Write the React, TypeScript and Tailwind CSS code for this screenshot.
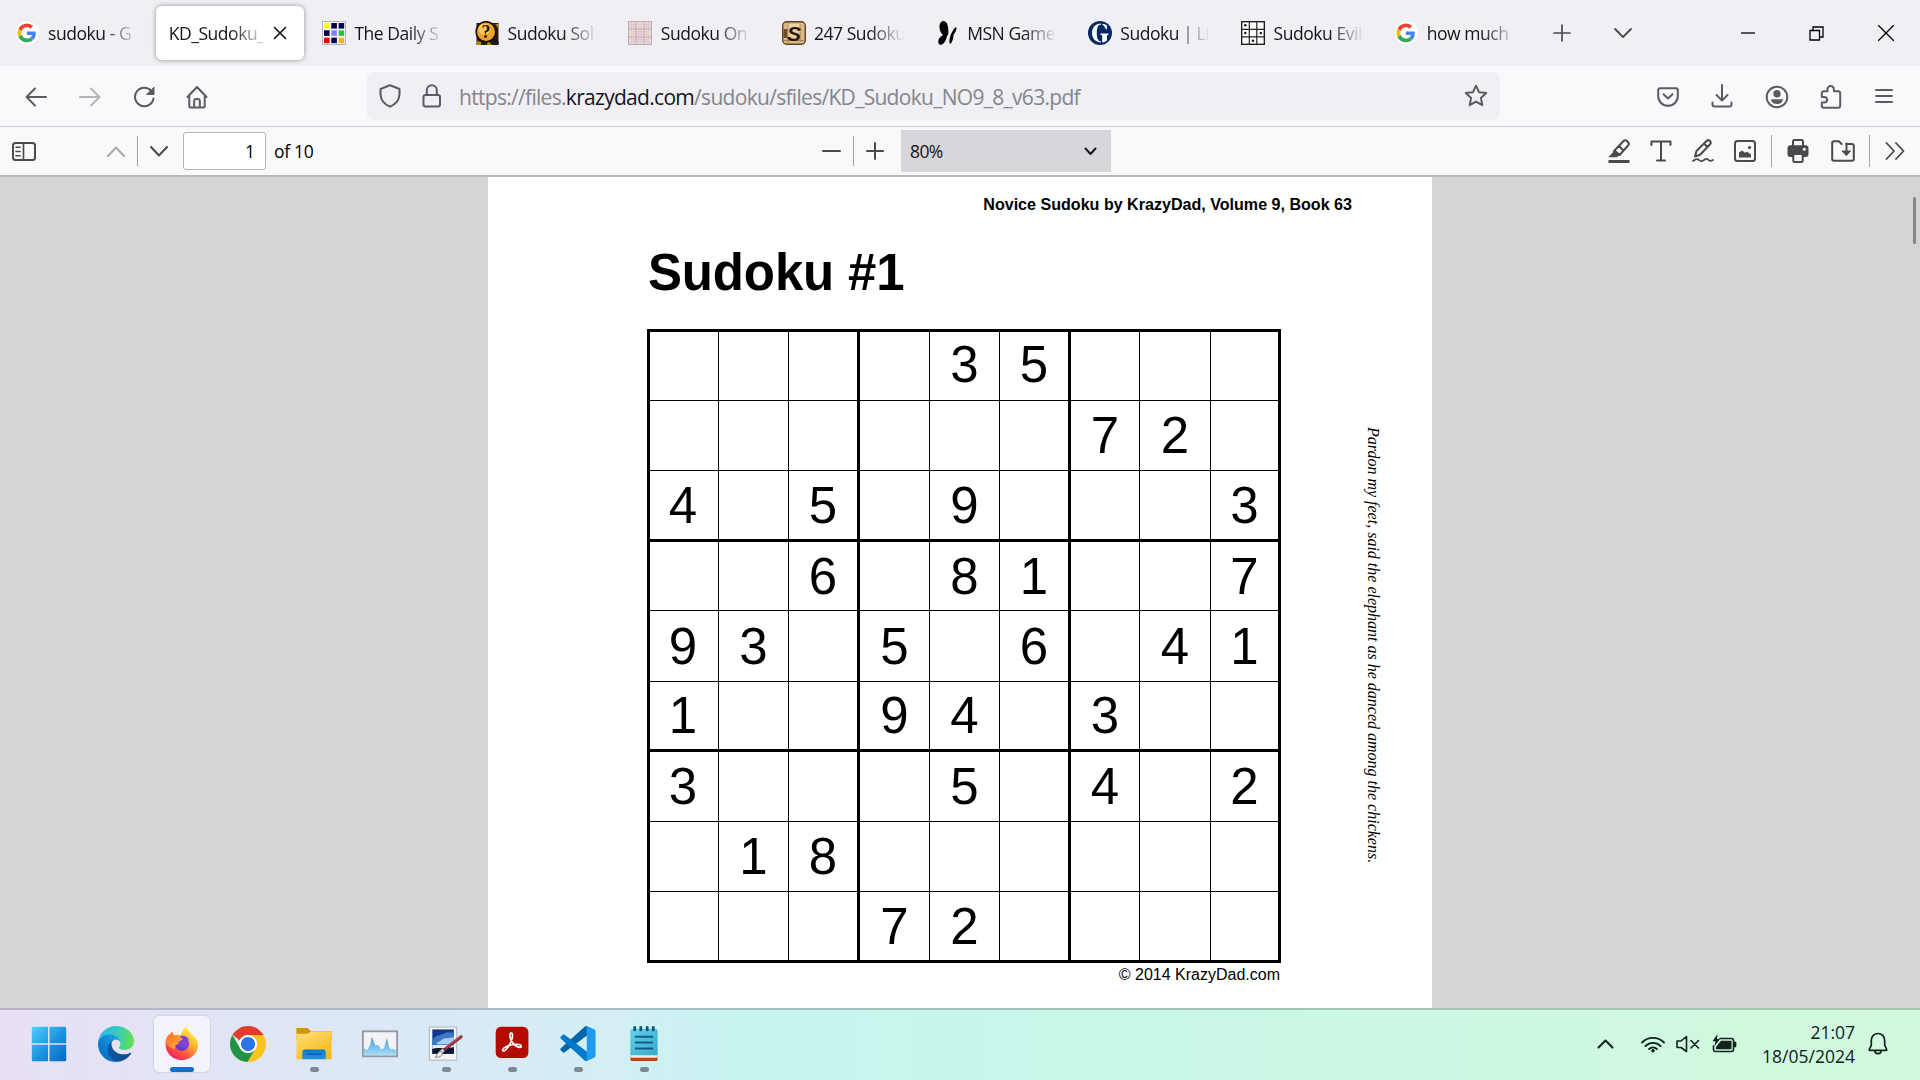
import React from "react";

type IconProps = {
  w: number;
  h: number;
  sw?: number;
  className?: string;
  children: React.ReactNode;
};

function Icon({ w, h, sw = 2, className = "", children }: IconProps) {
  return (
    <svg
      width={w}
      height={h}
      viewBox={`0 0 ${w} ${h}`}
      fill="none"
      stroke="currentColor"
      strokeWidth={sw}
      strokeLinecap="round"
      strokeLinejoin="round"
      className={`shrink-0 ${className}`}
    >
      {children}
    </svg>
  );
}

/* ---------- favicons ---------- */

function GoogleFav() {
  return (
    <svg width="24" height="24" viewBox="0 0 24 24" className="shrink-0">
      <circle cx="11.5" cy="12" r="11.5" fill="#fff" />
      <g transform="translate(1.5 2.6) scale(0.39)">
        <path fill="#EA4335" d="M24 9.5c3.54 0 6.71 1.22 9.21 3.6l6.85-6.85C35.9 2.38 30.47 0 24 0 14.62 0 6.51 5.38 2.56 13.22l7.98 6.19C12.43 13.72 17.74 9.5 24 9.5z" />
        <path fill="#4285F4" d="M46.98 24.55c0-1.57-.15-3.09-.38-4.55H24v9.02h12.94c-.58 2.96-2.26 5.48-4.78 7.18l7.73 6c4.51-4.18 7.09-10.36 7.09-17.65z" />
        <path fill="#FBBC05" d="M10.53 28.59c-.48-1.45-.76-2.99-.76-4.59s.27-3.14.76-4.59l-7.98-6.19C.92 16.46 0 20.12 0 24c0 3.88.92 7.54 2.56 10.78l7.97-6.19z" />
        <path fill="#34A853" d="M24 48c6.48 0 11.93-2.13 15.89-5.81l-7.73-6c-2.15 1.45-4.92 2.3-8.16 2.3-6.26 0-11.57-4.22-13.47-9.91l-7.98 6.19C6.51 42.62 14.62 48 24 48z" />
      </g>
    </svg>
  );
}

function DailyFav() {
  const c = ["#ffff00", "#000050", "#000050", "#000050", "#8080ff", "#20c840", "#f00000", "#000050", "#ffb010"];
  return (
    <svg width="24" height="24" viewBox="0 0 24 24" className="shrink-0">
      <rect x="0.5" y="0.5" width="23" height="23" fill="#fff" stroke="#b4b4c0" />
      {c.map((f, i) => (
        <rect key={i} x={2 + (i % 3) * 7.3} y={2 + Math.floor(i / 3) * 7.3} width="5.6" height="5.6" fill={f} />
      ))}
    </svg>
  );
}

function SolverFav() {
  return (
    <svg width="24" height="24" viewBox="0 0 24 24" className="-ml-px mr-px shrink-0">
      <rect x="1.5" y="2" width="22" height="22" fill="#2a1c06" />
      <path d="M2 20l4 1v3H2zM13 20l4 4h-5zM20 3h3v4z" fill="#b8860b" />
      <path d="M18 17l5 6" stroke="#15151a" strokeWidth="3.5" />
      <ellipse cx="11" cy="10.7" rx="9.8" ry="10" fill="#f0a028" stroke="#1a1206" strokeWidth="1.6" />
      <ellipse cx="9.5" cy="8" rx="6" ry="5.5" fill="#ffc95c" />
      <text x="11" y="17" textAnchor="middle" fontSize="18" className="font-['Liberation_Serif'] font-bold" fill="#1c1204">?</text>
    </svg>
  );
}

function PinkFav() {
  return (
    <svg width="24" height="24" viewBox="0 0 24 24" className="-ml-px mr-px shrink-0">
      <rect x="0.5" y="0.5" width="23" height="23" fill="#e9dcde" stroke="#b9a7b3" />
      <rect x="8" y="1" width="8" height="7" fill="#f2e4d8" />
      <rect x="1" y="8" width="7" height="8" fill="#efe3d6" />
      <rect x="16" y="8" width="7" height="8" fill="#efe3d6" />
      <path d="M3.3 0v24M5.8 0v24M10.7 0v24M13.2 0v24M18.3 0v24M20.8 0v24M0 3.3h24M0 5.8h24M0 10.7h24M0 13.2h24M0 18.3h24M0 20.8h24" stroke="#dcb9c4" strokeWidth="0.6" />
      <path d="M8 0v24M16 0v24M0 8h24M0 16h24" stroke="#c4a3b2" strokeWidth="0.9" />
    </svg>
  );
}

function S247Fav() {
  return (
    <svg width="24" height="24" viewBox="0 0 24 24" className="shrink-0">
      <rect x="0.7" y="0.7" width="22.6" height="22.6" rx="4" fill="#dfb887" stroke="#5d4327" strokeWidth="1.4" />
      <path d="M1.5 8h4v9h-4z" fill="#6d4c2c" />
      <path d="M6 2v20M2 19.500h20M18 3v18" stroke="#a97f50" strokeWidth="1" />
      <rect x="6.500" y="3" width="11" height="16" fill="#ecd0a6" />
      <text x="12" y="19.6" textAnchor="middle" fontSize="21" className="font-['Liberation_Sans'] font-bold italic" fill="#2b1a0b">S</text>
    </svg>
  );
}

function MsnFav() {
  return (
    <svg width="24" height="24" viewBox="0 0 24 24" className="shrink-0">
      <path d="M8.500 0c3.500 0 5.300 5 4.800 13.500C11.500 15 12 16 11 18.500 10 21 8 24 5.500 23.800 3 23.500 2.500 20 4.500 17c1-1.500 2.500-2.500 3.500-3C5.500 12 4 8 4.500 4.500 5 1.500 6.500 0 8.500 0z" fill="#000" />
      <path d="M20.500 6.500c1.200-.8 1.300 1 .5 3-.8 2.200-2 3.500-2.600 4.500.3 2-.6 5-1.800 7.500-1 1.800-2.300 1.500-2.200-1 .1-5 3-11.500 6.100-14z" fill="#000" />
    </svg>
  );
}

function GuardianFav() {
  return (
    <svg width="24" height="24" viewBox="0 0 24 24" className="shrink-0">
      <circle cx="12" cy="12" r="12" fill="#052962" />
      <path d="M13 2.600C7.500 2.800 4 6.500 4 12s3.500 9.200 9 9.400v-1C10 20.200 8.800 17.500 8.800 12S10 3.800 13 3.600zM14.300 2.700v1c1.300.4 2.600 2.300 3.600 4.600h1V4.400c-1.200-.9-2.900-1.500-4.600-1.700zM12.300 12.500v1l1.900.8v7.100c1.700-.2 3.700-1 4.800-1.900v-5.200l1.600-.8v-1z" fill="#fff" />
    </svg>
  );
}

function EvilFav() {
  return (
    <svg width="24" height="24" viewBox="0 0 24 24" className="-ml-px mr-px shrink-0">
      <rect x="0.7" y="0.7" width="22.600" height="22.600" fill="#fff" stroke="#111" strokeWidth="1.300" />
      <path d="M8.300 0v24M15.800 0v24M0 8.300h24M0 15.800h24" stroke="#222" strokeWidth="1.200" />
      <g fill="#111">
        <circle cx="4.300" cy="4.300" r="1.200" />
        <circle cx="4.300" cy="12" r="1.200" />
        <circle cx="19.800" cy="12" r="1.200" />
        <circle cx="12" cy="19.700" r="1.200" />
      </g>
    </svg>
  );
}

const tabs: { label: string; icon?: React.ReactNode; active?: boolean }[] = [
  { label: "sudoku - G", icon: <GoogleFav /> },
  { label: "KD_Sudoku_", active: true },
  { label: "The Daily S", icon: <DailyFav /> },
  { label: "Sudoku Sol", icon: <SolverFav /> },
  { label: "Sudoku On", icon: <PinkFav /> },
  { label: "247 Sudoku", icon: <S247Fav /> },
  { label: "MSN Game", icon: <MsnFav /> },
  { label: "Sudoku | Li", icon: <GuardianFav /> },
  { label: "Sudoku Evil", icon: <EvilFav /> },
  { label: "how much", icon: <GoogleFav /> },
];

function TabBar() {
  return (
    <div className="flex h-[66px] bg-[#f0eff4] text-[#15141a]">
      {tabs.map((t, i) =>
        t.active ? (
          <div key={i} className="w-[153.200px] shrink-0 px-[2.500px] pt-[6px]">
            <div className="flex h-[54px] items-center rounded-md bg-white pl-[13px] shadow-[0_0_5px_rgba(0,0,0,0.4)]">
              <div className="w-[99px] overflow-hidden whitespace-nowrap text-[17.500px] tracking-[-0.450px] [mask-image:linear-gradient(to_right,#000_62%,transparent)]">
                {t.label}
              </div>
              <Icon w={14} h={14} sw={1.700} className="ml-[5px]">
                <path d="M1.500 1.500l11 11M12.500 1.500l-11 11" />
              </Icon>
            </div>
          </div>
        ) : (
          <div key={i} className="flex w-[153.200px] shrink-0 items-center gap-2 pl-4">
            {t.icon}
            <div className="w-[92px] overflow-hidden whitespace-nowrap text-[17.500px] tracking-[-0.450px] [mask-image:linear-gradient(to_right,#000_60%,transparent_98%)]">
              {t.label}
            </div>
          </div>
        )
      )}
      <div className="flex flex-1 items-center text-[#4a4a52]">
        <Icon w={18} h={18} sw={1.700} className="ml-[21px]">
          <path d="M9 1v16M1 9h16" />
        </Icon>
        <Icon w={18} h={12} sw={1.800} className="ml-[43px]">
          <path d="M1 2l8 8 8-8" />
        </Icon>
        <Icon w={16} h={16} sw={1.300} className="ml-[108px] text-black">
          <path d="M1 8h14" strokeLinecap="butt" />
        </Icon>
        <Icon w={15} h={15} sw={1.300} className="ml-[53.500px] text-black">
          <path d="M1 4.500h9.500V14H1zM4 4V1h10v10h-3" strokeLinejoin="miter" />
        </Icon>
        <Icon w={16} h={16} sw={1.300} className="ml-[53.500px] text-black">
          <path d="M.5.5l15 15M15.500.5l-15 15" />
        </Icon>
      </div>
    </div>
  );
}

function NavBar() {
  return (
    <div className="flex h-[61px] items-center border-b border-[#ccccd2] bg-[#f9f9fb] pt-[2px] text-[#5b5b66]">
      <Icon w={22} h={20} className="ml-[25px]">
        <path d="M21 10H1.500M10 1.500L1.500 10l8.500 8.500" />
      </Icon>
      <Icon w={22} h={20} className="ml-[32px] text-[#b3b3b9]">
        <path d="M1 10h19.500M12 1.500l8.500 8.500-8.500 8.500" />
      </Icon>
      <Icon w={22} h={22} className="ml-[32px]">
        <path d="M18.500 5A9.300 9.300 0 1 0 20.500 12.500" />
        <path d="M21 1.500v7h-7z" fill="currentColor" strokeWidth={1} />
      </Icon>
      <Icon w={22} h={24} className="ml-[31px]">
        <path d="M1.500 12L11 2l9.500 10M3.300 10.500V21a1.500 1.500 0 0 0 1.500 1.500h12.400a1.500 1.500 0 0 0 1.500-1.500V10.500M8.200 22v-6a2 2 0 0 1 2-2h1.600a2 2 0 0 1 2 2v6" />
      </Icon>
      <div className="-mt-[2px] ml-[159px] flex h-12 w-[1133px] items-center rounded-[6px] bg-[#f0eff4]">
        <Icon w={22} h={24} className="ml-[12px]">
          <path d="M11 1.300L20.500 5v5c0 5-3.500 10-9.500 12.700C5 20 1.500 15 1.500 10V5z" />
        </Icon>
        <Icon w={20} h={24} className="ml-[21px]">
          <rect x="1.500" y="11" width="16.500" height="11.500" rx="2" />
          <path d="M4.800 11V6.300a5 5 0 0 1 10 0V11" />
        </Icon>
        <div className="ml-[17px] whitespace-nowrap pt-[3px] text-[21px] tracking-[-0.700px] text-[#85858b]">
          https://files.<span className="text-[#15141a]">krazydad.com</span>/sudoku/sfiles/KD_Sudoku_NO9_8_v63.pdf
        </div>
        <Icon w={24} h={24} className="ml-auto mr-[12px]">
          <path d="M12 1.700l3 6.500 7.200.8-5.300 4.900 1.400 7.300-6.300-3.600-6.300 3.600 1.400-7.300L1.800 9 9 8.200z" />
        </Icon>
      </div>
      <Icon w={22} h={20} className="ml-[157px]">
        <path d="M3 1.300h16a1.800 1.800 0 0 1 1.800 1.800V9A9.800 9.800 0 0 1 1.200 9V3.100A1.800 1.800 0 0 1 3 1.300zM6.500 7.300L11 11.500l4.500-4.200" />
      </Icon>
      <Icon w={22} h={24} className="-mt-[2px] ml-[32px]">
        <path d="M11 1v15M5.500 11l5.500 5.500 5.500-5.500M1.500 18.500v1.800a2.200 2.200 0 0 0 2.200 2.200h14.600a2.200 2.200 0 0 0 2.200-2.200v-1.800" />
      </Icon>
      <Icon w={24} h={24} className="ml-[32px]">
        <circle cx="12" cy="12" r="10.300" />
        <circle cx="12" cy="8.800" r="3.700" fill="currentColor" stroke="none" />
        <path d="M6 14.300h12c0 3-2.500 4.700-6 4.700s-6-1.700-6-4.700z" fill="currentColor" stroke="none" />
      </Icon>
      <Icon w={22} h={24} className="ml-[31px]">
        <path d="M7.500 5.500V4.300a3.200 3.200 0 0 1 6.400 0v1.900h4.300a2 2 0 0 1 2 2v12.500a2 2 0 0 1-2 2H3.800a2 2 0 0 1-2-2v-3.200h2.500a2.700 2.700 0 0 0 0-5.600H1.800V8.200a2 2 0 0 1 2-2h3.700z" />
      </Icon>
      <Icon w={18} h={16} className="-mt-[3px] ml-[33px]">
        <path d="M1 2h16M1 8h16M1 14h16" />
      </Icon>
    </div>
  );
}

function PdfToolbar() {
  return (
    <div className="flex h-[50px] items-center border-b-2 border-[#b8b8ba] bg-[#f9f9fa] text-[#4a4a4e]">
      <Icon w={24} h={19} className="ml-[12px]">
        <rect x="1" y="1" width="22" height="17" rx="2.500" />
        <path d="M11.500 1v17M4 5.300h4M4 9.500h4M4 13.700h4" strokeWidth={1.600} />
      </Icon>
      <Icon w={18} h={11} className="ml-[71px] text-[#a9a9ad]">
        <path d="M1 10l8-8.500L17 10" />
      </Icon>
      <div className="ml-[12px] h-[30px] w-px bg-[#a5a5a8]" />
      <Icon w={18} h={11} className="ml-[12px]">
        <path d="M1 1l8 8.500L17 1" />
      </Icon>
      <div className="ml-[15px] flex h-[38px] w-[83px] items-center justify-end rounded-[3px] border border-[#b5b5ba] bg-white pr-[10px] text-[17.500px] text-black">
        1
      </div>
      <div className="ml-[8px] w-[42px] whitespace-nowrap text-[17.500px] tracking-[-0.300px] text-black">of 10</div>
      <Icon w={19} h={4} className="ml-[506px]">
        <path d="M1 2h17" />
      </Icon>
      <div className="ml-[12px] h-[30px] w-px bg-[#a5a5a8]" />
      <Icon w={18} h={18} className="ml-[12px]">
        <path d="M9 1v16M1 9h16" />
      </Icon>
      <div className="ml-[17px] flex h-[42px] w-[210px] items-center justify-between bg-[#d7d7db] pl-[9px] pr-[14px] text-[17.500px] text-[#15141a]">
        <span className="tracking-[-0.600px]">80%</span>
        <Icon w={13} h={9}>
          <path d="M1.500 1.500l5 5.500 5-5.500" />
        </Icon>
      </div>
      <Icon w={24} h={24} className="ml-[496px]">
        <path d="M1.500 22.500h21" strokeWidth={3} strokeLinecap="butt" />
        <path d="M7.500 11.500l9-9.500c1-1 2.300-.9 3.400 0l1.200 1.200c1 1 1 2.300 0 3.300l-8.500 9.500zM12 7l4.500 4.500" />
        <path d="M7.500 11.500l5 4.500-3 1.800H2l4-4z" fill="currentColor" strokeWidth={1} />
      </Icon>
      <Icon w={22} h={22} className="ml-[19px]">
        <path d="M1.500 5V1.500h19V5M11 1.500v19M7 20.500h8" />
      </Icon>
      <Icon w={22} h={24} className="ml-[20px]">
        <path d="M3 17.500l1.500-5.500L14.500 2c1-1 2.300-1 3.300-.2 1.200 1 1.200 2.400.3 3.400L8 15.800 3 17.500zM12 4.500l3.500 3.500" />
        <path d="M1 22c3-2.500 4.500-2.500 6-1s3 1.500 5 0 3.500-1.300 4.500 0 2.500 1 4.500 0" strokeWidth={1.700} />
      </Icon>
      <Icon w={22} h={22} className="ml-[20px]">
        <rect x="1" y="1" width="20" height="20" rx="2.500" />
        <path d="M5 17.500v-5l3-2 3 2.200 2-1 4 2.800v3z" fill="currentColor" stroke="none" />
        <circle cx="15.500" cy="7.500" r="1.600" fill="currentColor" stroke="none" />
      </Icon>
      <div className="ml-[15px] h-[32px] w-px bg-[#a5a5a8]" />
      <Icon w={22} h={24} className="ml-[15px]">
        <path d="M6 7V2.500A1.500 1.500 0 0 1 7.500 1h7A1.500 1.500 0 0 1 16 2.500V7" />
        <path d="M3.500 6.300h15A3 3 0 0 1 21.500 9.300v6a2.700 2.700 0 0 1-2.700 2.700H3.200A2.700 2.700 0 0 1 .5 15.300v-6a3 3 0 0 1 3-3z" fill="currentColor" stroke="none" />
        <rect x="6.300" y="15" width="9.400" height="8" rx="1.500" fill="#f9f9fa" />
        <circle cx="17.300" cy="10.300" r="1.500" fill="#f9f9fa" stroke="none" />
      </Icon>
      <Icon w={24} h={22} className="ml-[22px]">
        <path d="M15.500 4H21a1.800 1.800 0 0 1 1.800 1.800V19A1.800 1.800 0 0 1 21 20.800H3A1.800 1.800 0 0 1 1.200 19V3A1.800 1.800 0 0 1 3 1.200h4.700c1.300 0 1.500 2.800 3 2.800" />
        <path d="M15.500 3.500V13" />
        <path d="M11.500 11h8l-4 4.500z" fill="currentColor" strokeWidth={1} />
      </Icon>
      <div className="ml-[14px] h-[32px] w-px bg-[#a5a5a8]" />
      <Icon w={20} h={18} sw={1.800} className="ml-[15px]">
        <path d="M1.500 1l7.500 8-7.500 8M11 1l7.500 8-7.500 8" />
      </Icon>
    </div>
  );
}

/* ---------- puzzle page ---------- */

const puzzle = [
  "....35...",
  "......72.",
  "4.5.9...3",
  "..6.81..7",
  "93.5.6.41",
  "1..94.3..",
  "3...5.4.2",
  ".18......",
  "...72....",
];

function Sudoku() {
  return (
    <div className="grid w-max grid-cols-[69px_70px_71px_70px_70px_71px_69px_71px_70px] grid-rows-[69px_70px_71px_69px_71px_70px_70px_70px_71px] border-l-[3px] border-t-[3px] border-black">
      {puzzle.flatMap((row, r) =>
        row.split("").map((d, c) => (
          <div
            key={`${r}-${c}`}
            className={`flex items-center justify-center border-black text-[51px] leading-none ${
              c % 3 === 2 ? "border-r-[3px]" : "border-r"
            } ${r % 3 === 2 ? "border-b-[3px]" : "border-b"} ${r === 0 ? "pb-[3px]" : ""} ${c === 0 ? "pr-[2px]" : ""}`}
          >
            {d === "." ? "" : d}
          </div>
        ))
      )}
    </div>
  );
}

function Viewer() {
  return (
    <div className="flex h-[831px] overflow-hidden bg-[#d4d4d7]">
      <div className="ml-[488px] w-[944px] shrink-0 bg-white font-['Liberation_Sans',Arial,sans-serif] text-black">
        <div className="pr-[80px] pt-[16px] text-right text-[16.080px] font-bold leading-[22px]">
          Novice Sudoku by KrazyDad, Volume 9, Book 63
        </div>
        <h1 className="pl-[160px] pt-[29px] text-[51px] font-bold leading-[58px] tracking-[-0.150px]">Sudoku #1</h1>
        <div className="flex pl-[159px] pt-[27px]">
          <div>
            <Sudoku />
            <div className="pr-px pt-[2px] text-right text-[16px] leading-[20px]">© 2014 KrazyDad.com</div>
          </div>
          <div className="ml-[82px] whitespace-nowrap pt-[98px] font-['Liberation_Serif',serif] text-[16px] italic leading-[20px] [writing-mode:vertical-rl]">
            Pardon my feet, said the elephant as he danced among the chickens.
          </div>
        </div>
      </div>
      <div className="flex flex-1 justify-end pr-[4px] pt-[20px]">
        <div className="h-[47px] w-[3px] rounded-full bg-[#858587]" />
      </div>
    </div>
  );
}

/* ---------- taskbar ---------- */

function WindowsLogo() {
  return (
    <svg width="36" height="36" viewBox="0 0 36 36" className="mr-[3px]">
      <defs>
        <linearGradient id="win" x1="0" y1="0" x2="1" y2="1">
          <stop offset="0" stopColor="#4fd0fb" />
          <stop offset="0.500" stopColor="#1e97e0" />
          <stop offset="1" stopColor="#0569c4" />
        </linearGradient>
      </defs>
      <path d="M2 .8h15v16.400H.8V2A1.200 1.200 0 0 1 2 .8zM18.500.8h15.300A1.200 1.200 0 0 1 35.200 2v15.200H18.500zM.8 18.700H17v16.500H2A1.200 1.200 0 0 1 .8 34zM18.500 18.700h16.700V34a1.200 1.200 0 0 1-1.400 1.200H18.500z" fill="url(#win)" />
    </svg>
  );
}

function EdgeLogo() {
  return (
    <svg width="36" height="36" viewBox="0 0 256 256">
      <defs>
        <linearGradient id="e1" x1="63" y1="178" x2="241" y2="178" gradientUnits="userSpaceOnUse">
          <stop offset="0" stopColor="#0c59a4" />
          <stop offset="1" stopColor="#114a8b" />
        </linearGradient>
        <linearGradient id="e2" x1="153" y1="100" x2="46" y2="216" gradientUnits="userSpaceOnUse">
          <stop offset="0" stopColor="#1b9de2" />
          <stop offset="0.500" stopColor="#1187d4" />
          <stop offset="1" stopColor="#0473cb" />
        </linearGradient>
        <linearGradient id="e3" x1="10" y1="60" x2="250" y2="110" gradientUnits="userSpaceOnUse">
          <stop offset="0" stopColor="#2fb6ea" />
          <stop offset="0.500" stopColor="#36cbbb" />
          <stop offset="1" stopColor="#62e04f" />
        </linearGradient>
      </defs>
      <path d="M231 190.500c-3.400 1.800-6.900 3.400-10.500 4.700-11.500 4.300-23.700 6.500-36 6.500-47.400 0-88.700-32.600-88.700-74.500.1-11.400 6.400-21.900 16.400-27.300-42.900 1.800-53.900 46.500-53.900 72.700 0 74 68.200 81.500 82.900 81.500 7.900 0 19.900-2.300 27-4.600l1.300-.4c27.600-9.500 51-28.100 66.600-52.800 1.200-1.900.6-4.300-1.200-5.500-1.200-.8-2.700-.9-3.900-.3z" fill="url(#e1)" />
      <path d="M105.700 241.400c-8.900-5.500-16.600-12.800-22.700-21.300-26.300-36-18.400-86.500 17.600-112.800 3.800-2.700 7.700-5.200 11.900-7.200 3.100-1.500 8.400-4.100 15.500-4 10.100.1 19.600 4.900 25.700 13 4 5.400 6.300 11.900 6.400 18.700 0-.2 24.500-79.600-80-79.600-43.900 0-80 41.700-80 78.200-.2 19.300 4 38.500 12.100 56 27.600 58.800 94.800 87.600 156.400 67.100-21.100 6.600-44.100 3.700-62.900-8.100z" fill="url(#e2)" />
      <path d="M152.300 148.900c-.8 1-3.300 2.500-3.300 5.700 0 2.600 1.700 5.100 4.700 7.200 14.400 10 41.500 8.700 41.600 8.700 10.700 0 21.100-2.900 30.300-8.300 18.800-11 30.400-31.100 30.400-52.900.3-22.400-8-37.300-11.300-43.900C223.500 23.900 177.700 0 128 0 58 0 1 56.200 0 126.200c.5-36.500 36.800-66 80-66 3.500 0 23.500.3 42 10.100 16.300 8.600 24.900 18.900 30.800 29.200 6.200 10.700 7.300 24.100 7.300 29.500s-2.700 13.300-7.800 19.900z" fill="url(#e3)" />
    </svg>
  );
}

function FirefoxLogo() {
  return (
    <svg width="36" height="36" viewBox="0 0 36 36">
      <defs>
        <linearGradient id="f1" x1="0.800" y1="0.100" x2="0.200" y2="1">
          <stop offset="0" stopColor="#fff04a" />
          <stop offset="0.350" stopColor="#ffb02c" />
          <stop offset="0.650" stopColor="#ff5a3c" />
          <stop offset="1" stopColor="#ef1070" />
        </linearGradient>
        <linearGradient id="f2" x1="0.700" y1="0" x2="0.300" y2="1">
          <stop offset="0" stopColor="#a850f0" />
          <stop offset="1" stopColor="#5a38b8" />
        </linearGradient>
        <linearGradient id="f3" x1="0" y1="0" x2="1" y2="1">
          <stop offset="0" stopColor="#ff6a28" />
          <stop offset="1" stopColor="#ffb22e" />
        </linearGradient>
      </defs>
      <path d="M17 9.500C17.500 5.500 20 2.500 22.500.8c.5 2.700 2.500 4.700 5 7C31 11 34.500 14.500 34.500 19.300 34.500 28 27 35 17.800 35S1.200 28 1.200 19.300c0-4.500 1-8 3.300-10.800 0 1 0 1.500.3 2C5.500 8.500 6.800 7 8.300 6c0 1.500.5 2.700 1.500 3.500 2.500-.6 5-.5 7.200 0z" fill="url(#f1)" />
      <circle cx="18" cy="18" r="7.500" fill="url(#f2)" />
      <path d="M17 10c4-.5 7.500 1.500 8.500 4.500l-3-1.500c1.500 2 1.800 4 1.300 6-1.500-3-4-3.500-6.800-3z" fill="#7b3fd0" />
      <path d="M25.500 12c1.500 3.500 1 8-1.500 10.500 4-1.500 6-5 5.500-9z" fill="#ffb83a" opacity="0.600" />
      <path d="M1.200 19c0-4.500 1-7.700 3.300-10.500 0 1 0 1.500.3 2C5.500 8.500 6.800 7 8.300 6c0 1.500.5 3 2 4 2-.5 4 .2 5.500 1.500 1 .8 2.500 1 3 1.300-.5 2-3 2-4.500 3.500.5 1 .5 2-1 2.500-2 .8-3.300 2.500-2.300 5C7 24 5 19.500 1.200 19z" fill="url(#f3)" />
    </svg>
  );
}

function ChromeLogo() {
  return (
    <svg width="36" height="36" viewBox="0 0 48 48">
      <path d="M24 0c8.900 0 16.600 4.800 20.800 12H24c-5 0-9.200 3-11 7.300L3.500 11.700C7.900 4.600 15.500 0 24 0z" fill="#e33b2e" />
      <path d="M3.200 12A24 24 0 0 0 23.500 48l10.700-18c-2 3.600-5.800 6-10.200 6-4.500 0-8.400-2.500-10.400-6.100z" fill="#229342" />
      <path d="M44.800 12A24 24 0 0 1 23.500 48l10.900-18c2.500-4 2.100-9.500-.9-13.300L24 12z" fill="#fcc31e" />
      <circle cx="24" cy="24" r="12" fill="#fff" />
      <circle cx="24" cy="24" r="9.500" fill="#2a74e8" />
    </svg>
  );
}

function FolderLogo() {
  return (
    <svg width="36" height="36" viewBox="0 0 36 36">
      <defs>
        <linearGradient id="fo" x1="0" y1="0" x2="0.600" y2="1">
          <stop offset="0" stopColor="#ffe07a" />
          <stop offset="1" stopColor="#f9b91e" />
        </linearGradient>
        <linearGradient id="fb" x1="0" y1="0" x2="0" y2="1">
          <stop offset="0" stopColor="#0c78cc" />
          <stop offset="1" stopColor="#2394e6" />
        </linearGradient>
      </defs>
      <path d="M0 2h11.500l3 3H36v10H0z" fill="#cf9410" />
      <path d="M0 8h11.500l3.500-2.700h21V34H0z" fill="url(#fo)" />
      <path d="M6 34V27a3 3 0 0 1 3-3h18a3 3 0 0 1 3 3V34z" fill="url(#fb)" />
      <path d="M11 29h14" stroke="#0b5cad" strokeWidth="1.600" strokeLinecap="round" />
    </svg>
  );
}

function MonitorLogo() {
  return (
    <svg width="36" height="36" viewBox="0 0 36 36">
      <defs>
        <linearGradient id="mo" x1="0" y1="0" x2="0" y2="1">
          <stop offset="0" stopColor="#3f9bd6" />
          <stop offset="1" stopColor="#a5dcf8" />
        </linearGradient>
      </defs>
      <rect x="0.900" y="5.300" width="34.200" height="25" fill="#f3f3f5" stroke="#9299a0" strokeWidth="1.800" />
      <path d="M2 29V22l2 2 2-1 2-4 2-8.500 2 6 1.500 3 2-.5 2 1.500 1.500 3 3-1.500L25 12l2 9 2 2.500 2-1 3 2V29z" fill="url(#mo)" />
    </svg>
  );
}

function PaintLogo() {
  return (
    <svg width="36" height="36" viewBox="0 0 36 36">
      <rect x="1" y="1" width="28" height="34" fill="#f4f4f4" stroke="#b9bcc0" strokeWidth="1.200" />
      <rect x="4" y="3.500" width="22" height="25" fill="#13378c" />
      <path d="M4 14c4-5 8-4 11-6s7-2 11-1v9c-6 1-8 3-13 3s-6 0-9 1z" fill="#3b78c4" />
      <path d="M8 17c5-1 6-4 9-4.500 4-.5 6 0 9-1.500v8H9z" fill="#a9cdec" />
      <path d="M4 19.500h22v4H4z" fill="#dfeaf6" />
      <path d="M4 23.500c5-2 9 0 13-1s6 0 9-1v7H4z" fill="#0a1430" />
      <path d="M33.500 11L14 26" stroke="#8c2336" strokeWidth="3" strokeLinecap="round" />
      <path d="M33 11L18 22.500" stroke="#c8616c" strokeWidth="0.900" />
      <path d="M15.500 24.500l-3.500 3" stroke="#c6cbd0" strokeWidth="3.500" />
      <path d="M12.500 26c-3 0-3 3-5.500 6 4 .5 7-1 7.500-4z" fill="#f0ead8" stroke="#555" strokeWidth="0.700" />
    </svg>
  );
}

function AcrobatLogo() {
  return (
    <svg width="36" height="36" viewBox="0 0 36 36">
      <rect x="1.300" y="0.800" width="33.500" height="32" rx="5.500" fill="#b30b00" />
      <path d="M16.500 7.300c2.300-1 2.300 3 1.400 6.200-1 4-4.500 9.500-7 11.500-1.500 1.200-3 .5-2.300-1 1-2.300 7-4.500 11-5 3.500-.4 7.500 0 7.900 1.700.3 1.700-2.300 1.500-4.500.3-3.200-1.700-6.500-6-7-9.800-.2-1.700-.3-3.300.5-3.900z" fill="none" stroke="#fff" strokeWidth="1.700" strokeLinejoin="round" />
    </svg>
  );
}

function VsCodeLogo() {
  return (
    <svg width="36" height="36" viewBox="0 0 100 100">
      <path d="M96.500 10.800L75.900.9a6.200 6.200 0 0 0-7.100 1.200L1.300 63.600a4.200 4.200 0 0 0 0 6.200l5.500 5a4.200 4.200 0 0 0 5.300.2L93.400 13.400c2.700-2.100 6.600-.1 6.600 3.300v-.3c0-2.400-1.400-4.600-3.500-5.600z" fill="#0065a9" />
      <path d="M96.500 89.200l-20.600 9.900a6.200 6.200 0 0 1-7.100-1.200L1.300 36.400a4.200 4.200 0 0 1 0-6.200l5.500-5a4.200 4.200 0 0 1 5.300-.2l81.300 61.600c2.700 2.100 6.600.1 6.600-3.300v.3c0 2.400-1.400 4.600-3.500 5.600z" fill="#007acc" />
      <path d="M75.900 99.100a6.200 6.200 0 0 1-7.100-1.200c2.300 2.300 6.200.7 6.200-2.600V4.700c0-3.300-3.900-4.900-6.200-2.600A6.200 6.200 0 0 1 75.900.9l20.600 9.900c2.200 1 3.500 3.200 3.500 5.600v67.200c0 2.400-1.400 4.600-3.500 5.600z" fill="#1f9cf0" />
    </svg>
  );
}

function NotepadLogo() {
  return (
    <svg width="36" height="36" viewBox="0 0 36 36">
      <defs>
        <linearGradient id="np" x1="0" y1="0" x2="1" y2="1">
          <stop offset="0" stopColor="#62d2e6" />
          <stop offset="1" stopColor="#38a9cc" />
        </linearGradient>
      </defs>
      <path d="M4 30h28v4a2 2 0 0 1-2 2H6a2 2 0 0 1-2-2z" fill="#b0500f" />
      <path d="M4 28h28v4.500H4z" fill="#f1ece6" />
      <path d="M6 3h24a2 2 0 0 1 2 2v25H4V5a2 2 0 0 1 2-2z" fill="url(#np)" />
      <path d="M8.500 1.500v2.500M14.700 1.500v2.500M21.300 1.500v2.500M27.500 1.500v2.500" stroke="#11587c" strokeWidth="3" strokeLinecap="round" />
      <path d="M9.500 11h17M9.500 17h17M9.500 23h17" stroke="#0f5f85" strokeWidth="2" strokeLinecap="round" />
    </svg>
  );
}

const apps: { icon: React.ReactNode; state: "none" | "open" | "active" }[] = [
  { icon: <WindowsLogo />, state: "none" },
  { icon: <EdgeLogo />, state: "none" },
  { icon: <FirefoxLogo />, state: "active" },
  { icon: <ChromeLogo />, state: "none" },
  { icon: <FolderLogo />, state: "open" },
  { icon: <MonitorLogo />, state: "none" },
  { icon: <PaintLogo />, state: "open" },
  { icon: <AcrobatLogo />, state: "open" },
  { icon: <VsCodeLogo />, state: "open" },
  { icon: <NotepadLogo />, state: "open" },
];

function Taskbar() {
  return (
    <div className="flex h-[72px] border-t-2 border-black/20 bg-[linear-gradient(to_right,#e8e0f4_0px,#e2e4f5_180px,#dae8f7_400px,#d3eff4_620px,#c8f4f0_730px,#c9f7e8_1100px,#cdf8e2_1500px,#d2f9dd_1920px)] pl-[17px] text-[#10221c]">
      {apps.map((a, i) => (
        <div key={i} className="flex w-[66px] flex-col items-center pt-[6px]">
          <div
            className={`flex h-[56px] w-[56px] flex-col items-center rounded-[5px] pt-[10px] ${
              a.state === "active" ? "bg-[#f3f3fb] shadow-[0_0_2px_rgba(0,0,0,0.25)]" : ""
            }`}
          >
            {a.icon}
            {a.state === "active" && <div className="mt-[6px] h-[5px] w-[24px] rounded-full bg-[#0f6fca]" />}
            {a.state === "open" && <div className="mt-[6px] h-[5px] w-[9px] rounded-full bg-[#7e8a93]" />}
          </div>
        </div>
      ))}
      <div className="ml-auto flex items-center pb-[3px]">
        <Icon w={17} h={10}>
          <path d="M1.500 8.500l7-7 7 7" />
        </Icon>
        <Icon w={24} h={18} sw={1.800} className="ml-[27px]">
          <path d="M1 7.500a15.500 15.500 0 0 1 22 0M4.500 11a10.500 10.500 0 0 1 15 0M8 14a6 6 0 0 1 8 0" />
          <circle cx="12" cy="15.800" r="1.800" fill="currentColor" stroke="none" />
        </Icon>
        <Icon w={24} h={18} sw={1.600} className="ml-[11px]">
          <path d="M1 6h4l5.500-4.500v15L5 12.500H1zM15 5.500l7.500 7.500M22.500 5.500L15 13" />
        </Icon>
        <Icon w={25} h={20} sw={1.600} className="ml-[12px]">
          <path d="M8 4.500h11.500a2 2 0 0 1 2 2v9a2 2 0 0 1-2 2h-16a2 2 0 0 1-2-2V12" />
          <path d="M9 6.700h10.500v8.600H4V13z" fill="currentColor" stroke="none" />
          <path d="M22 8.500h1.500v4H22z" fill="currentColor" />
          <path d="M5.500 0L.5 7.300h3L2.300 12.500 8 5H5z" fill="currentColor" stroke="none" />
        </Icon>
        <div className="ml-[23px] w-[95px] text-right text-[17.500px] leading-[24px]">
          <div>21:07</div>
          <div>18/05/2024</div>
        </div>
        <Icon w={20} h={23} sw={1.700} className="ml-[13px] mr-[32px]">
          <path d="M10 1.500a6.700 6.700 0 0 0-6.700 6.700v5L1.300 17.500a.5.500 0 0 0 .5.800h16.400a.5.500 0 0 0 .5-.8l-2-4.300v-5A6.700 6.700 0 0 0 10 1.500zM7 19a3 2.700 0 0 0 6 0" />
        </Icon>
      </div>
    </div>
  );
}

export default function App() {
  return (
    <div className="h-[1080px] w-[1920px] overflow-hidden font-['Open_Sans','Noto_Sans',sans-serif]">
      <TabBar />
      <NavBar />
      <PdfToolbar />
      <Viewer />
      <Taskbar />
    </div>
  );
}
